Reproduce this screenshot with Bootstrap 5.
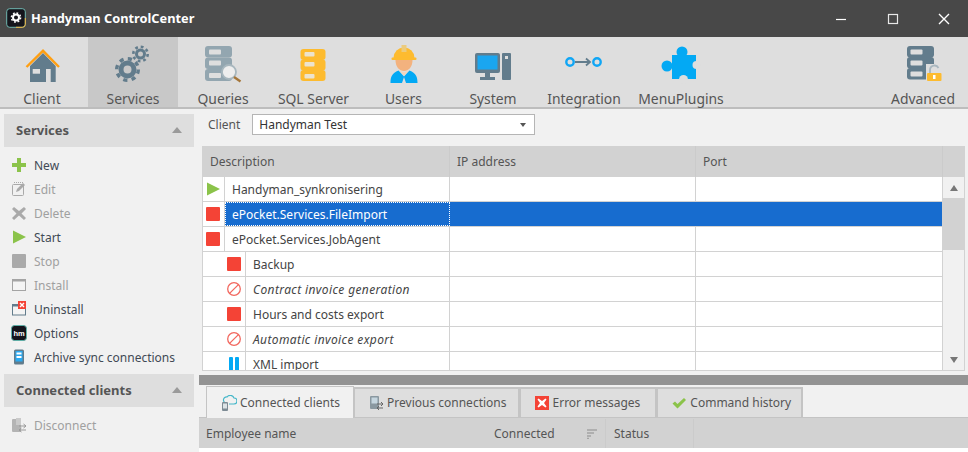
<!DOCTYPE html>
<html lang="en">
<head>
<meta charset="utf-8">
<title>Handyman ControlCenter</title>
<link href="https://cdn.jsdelivr.net/npm/bootstrap@5.3.0/dist/css/bootstrap.min.css" rel="stylesheet">
<style>
html,body{margin:0;height:452px;overflow:hidden;background:#fff}
body{font-family:"Noto Sans","Open Sans",sans-serif;font-size:12px;line-height:16px;color:#444}
.titlebar{height:37px;background:#484848;color:#fff;font-weight:700;font-size:12.8px}
.app-logo{width:20px;height:20px;margin:8px 5px 0 6px;flex:none}
.app-title{padding-top:10px}
.win-btn{width:52px;height:37px;display:flex;align-items:center;justify-content:center}
.win-close{width:49px}
.ribbon{height:72px;background:#dedede;border-bottom:2px solid #bdbdbd}
.rb-item{height:70px;display:flex;flex-direction:column;align-items:center;color:#555;font-size:13.9px;line-height:20px;flex:none}
.rb-item svg{height:36px;width:40px;margin-top:11px;margin-bottom:5px;flex:none;overflow:visible}
.rb-active{background:#c8c8c8}
.rb-client{width:88px;padding-right:4px}
.rb-w90{width:90px}.rb-w91{width:91px}.rb-w89{width:89px}.rb-w92{width:92px}.rb-w102{width:102px}
.workspace{height:343px}
.sidebar{width:199px;background:#f1f1f1;flex:none;padding-top:5px}
.grp-head{margin:0 5px 0 4px;height:33px;background:#dedede;font-weight:700;font-size:13px;color:#555;padding:0 12px 2px;display:flex;align-items:center;justify-content:space-between}
.caret-up{width:0;height:0;border-left:5px solid transparent;border-right:5px solid transparent;border-bottom:6px solid #9a9a9a}
.act-list{padding:7px 0 4px 11px}
.act{height:24px;display:flex;align-items:center;gap:7px;color:#414a55}
.act svg{width:16px;height:16px;flex:none;margin-top:-2px}
.act-off{color:#a0a0a0}
.main-pane{flex:1;min-width:0;background:#f1f1f1;display:flex;flex-direction:column}
.client-row{height:37px;padding:5px 0 0 9px;display:flex;align-items:flex-start;gap:12px;color:#555;flex:none}
.client-row span{padding-top:3px}
.combo{width:283px;height:21px;background:#fff;border:1px solid #b5b5b5;color:#333;padding:1px 6px;display:flex;justify-content:space-between;align-items:center}
.combo-caret{width:0;height:0;border-left:3.5px solid transparent;border-right:3.5px solid transparent;border-top:4px solid #555;margin-right:2px}
.svc-grid{margin-left:3px;width:763px;height:225px;background:#fff;border:1px solid #d2d2d2;border-top:0;display:flex;flex-direction:column;flex:none}
.grid-head{height:31px;background:#d2d2d2;display:grid;grid-template-columns:247px 246px 247px 1fr;flex:none;color:#555}
.grid-head div{padding:8px 0 0 7px;border-right:1px solid #cbcbcb}
.grid-head div:last-child{border-right:0}
.grid-body{flex:1;display:flex;min-height:0}
.rows{flex:1;overflow:hidden;min-width:0}
.g-row{height:25px;display:grid;grid-template-columns:22px 225px 246px 1fr;color:#444;border-bottom:1px solid #d2d2d2}
.g-row.sub{grid-template-columns:43px 204px 246px 1fr}
.g-row>div{border-right:1px solid #d2d2d2;padding:5px 0 0 7px;white-space:nowrap;height:24px}
.g-row>div:last-child{border-right:0}
.g-row>.ic{padding:0 2px 0 0;display:flex;align-items:center;justify-content:center}
.g-row.sub>.ic{justify-content:flex-end;padding-right:3px}
.g-row>.cell-sel{background:#176ccf;color:#fff;outline:1px dotted #fff;outline-offset:-1px;border-right-color:#176ccf}
.g-row>.cell-blue{background:#176ccf;border-right-color:#176ccf}
.it-text{font-style:italic;letter-spacing:.38px}
.sbar{width:22px;flex:none;background:#f1f1f1;display:flex;flex-direction:column;border-left:1px solid #d2d2d2}
.sb-btn{height:21px;display:flex;align-items:center;justify-content:center;flex:none}
.sb-up{width:0;height:0;border-left:4px solid transparent;border-right:4px solid transparent;border-bottom:6px solid #777}
.sb-dn{width:0;height:0;border-left:4px solid transparent;border-right:4px solid transparent;border-top:6px solid #777}
.sb-thumb{height:52px;background:#d2d2d2;flex:none}
.sb-track{flex:1}
.splitter{height:10px;background:#939393;margin-top:4px;flex:none}
.tabstrip{height:33px;display:flex;padding:1px 0 0 7px;flex:none;border-bottom:1px solid #c4c4c4;background:#f1f1f1}
.tb{height:30px;background:#dedede;border:2px solid #c4c4c4;border-bottom:0;border-left-width:1px;display:flex;align-items:center;gap:3px;color:#555;padding:0 12px 0 13px;margin-top:1px}
.tb svg{width:16px;height:16px;flex:none}
.tb-on{background:#f1f1f1;height:32px;margin-top:0;margin-bottom:-1px;border-width:1px 1px 0 1px;padding-left:14px;padding-right:13px}
.tb-prev{padding-right:11px}
.tb-err{padding-right:15px}
.tb-cmd{padding:0 10px 0 13px}
.bot-head{height:30px;background:#d2d2d2;display:flex;color:#555;flex:none;align-items:center;padding-top:1px}
.bot-fill{flex:1;background:#fff}
.bh1{width:295px;padding-left:7px}
.bh2{width:112px;display:flex;justify-content:space-between;padding-right:7px;height:100%;align-items:center;border-right:1px solid #cbcbcb}
.bh3{padding-left:8px;width:88px;height:100%;display:flex;align-items:center;border-right:1px solid #cbcbcb}
</style>
</head>
<body>
<div class="titlebar d-flex justify-content-between">
  <div class="d-flex">
    <svg class="app-logo" viewBox="0 0 20 20"><rect x=".7" y=".7" width="18.6" height="18.6" rx="3" fill="#15151c" stroke="#6fb7b0"/><path d="M10 19.3h6.300a3 3 0 0 0 3-3V10" fill="none" stroke="#f2b33d"/><circle cx="10" cy="9.500" r="3" fill="none" stroke="#fff" stroke-width="2"/><circle cx="10" cy="9.500" r="4.600" fill="none" stroke="#fff" stroke-width="1.500" stroke-dasharray="1.800 1.800"/></svg>
    <div class="app-title">Handyman ControlCenter</div>
  </div>
  <div class="d-flex">
    <div class="win-btn"><svg width="12" height="12" viewBox="0 0 12 12"><path d="M1 6.500h10" stroke="#fff" stroke-width="1.200"/></svg></div>
    <div class="win-btn"><svg width="12" height="12" viewBox="0 0 12 12"><rect x="1.500" y="1.500" width="9" height="9" fill="none" stroke="#e8e8e8" stroke-width="1.200"/></svg></div>
    <div class="win-btn win-close"><svg width="12" height="12" viewBox="0 0 12 12"><path d="M1 1l10 10M11 1L1 11" stroke="#fff" stroke-width="1.400"/></svg></div>
  </div>
</div>

<div class="ribbon d-flex">
  <div class="rb-item rb-client"><svg viewBox="0 0 40 36"><path d="M8 18L21 5l12.700 13v16H28.700V21H24v13H8z" fill="#627c8c"/><rect x="10.700" y="21" width="7.300" height="4.700" fill="#dedede"/><path d="M4.500 19L21 2.800 37 19" fill="none" stroke="#ff9f12" stroke-width="2.400"/></svg>Client</div>
  <div class="rb-item rb-active rb-w90"><svg viewBox="0 0 40 36"><g fill="none" stroke="#627c8c"><circle cx="14.500" cy="21.500" r="6.500" stroke-width="5"/><circle cx="14.500" cy="21.500" r="10.800" stroke-width="3.400" stroke-dasharray="4.200 4.280"/><circle cx="27.500" cy="6" r="4" stroke-width="3"/><circle cx="27.500" cy="6" r="7.200" stroke-width="2.600" stroke-dasharray="2.800 2.855"/></g></svg>Services</div>
  <div class="rb-item rb-w90"><svg viewBox="0 0 40 36"><g fill="#93a6b0"><rect x="2" y="-2" width="27" height="11.500" rx="3"/><rect x="2" y="9.500" width="27" height="11.500" rx="3"/><rect x="2" y="21" width="27" height="12" rx="3"/></g><g fill="#dedede"><rect x="6" y="1.500" width="12" height="5" rx="1"/><rect x="6" y="12.500" width="12" height="5" rx="1"/><rect x="6" y="25" width="12" height="5" rx="1"/></g><circle cx="26" cy="24" r="7" fill="#eee" stroke="#a8b7be" stroke-width="1.800"/><path d="M31 29l6.500 4.500" stroke="#a5763a" stroke-width="2.400"/></svg>Queries</div>
  <div class="rb-item rb-w91"><svg viewBox="0 0 40 36"><g fill="#fdbb2f"><rect x="6.500" y="1" width="25" height="11" rx="3"/><rect x="6.500" y="11.500" width="25" height="11" rx="3"/><rect x="6.500" y="22" width="25" height="11" rx="3"/></g><g fill="#ece3cd"><rect x="10.500" y="4" width="10" height="4.500" rx="1"/><rect x="10.500" y="14" width="10" height="4.500" rx="1"/><rect x="10.500" y="26" width="10" height="4.500" rx="1"/></g></svg>SQL Server</div>
  <div class="rb-item rb-w89"><svg viewBox="0 0 40 36"><path d="M9.500 10a10.500 10.500 0 0 1 21 0z" fill="#fdbb2f"/><rect x="7.500" y="9.500" width="25" height="2.500" rx="1" fill="#fdbb2f"/><rect x="17.500" y="-3" width="5" height="7" fill="#eccb7c"/><path d="M11.500 12h17c0 7-4 11-8.500 11s-8.500-4-8.500-11z" fill="#f3b27e"/><path d="M6.500 35c0-6 1.500-10 8-12.500l5.500 6 5.500-6c6.500 2.500 8 6.500 8 12.500z" fill="#03a9f4"/><path d="M15.500 22.500l4.500 5 4.500-5-4.500 2z" fill="#f6d5b8"/><path d="M18 35l2-6 2 6z" fill="#dedede"/></svg>Users</div>
  <div class="rb-item rb-w90"><svg viewBox="0 0 40 36"><rect x="2" y="5" width="25" height="20" rx="2" fill="#627c8c"/><rect x="4.500" y="7.500" width="20" height="14" fill="#1aa6f0"/><path d="M12 25h5v4h-5zM7 29h15v3H7z" fill="#627c8c"/><rect x="29" y="5" width="9" height="27" rx="1" fill="#627c8c"/><rect x="32" y="8" width="3" height="3" fill="#dedede"/></svg>System</div>
  <div class="rb-item rb-w92"><svg viewBox="0 0 40 36"><circle cx="6" cy="14" r="3.700" fill="none" stroke="#10a6f5" stroke-width="2.400"/><circle cx="33" cy="14" r="3.700" fill="none" stroke="#10a6f5" stroke-width="2.400"/><path d="M11 14h14M22 10.500l4 3.500-4 3.500" fill="none" stroke="#627c8c" stroke-width="1.800"/></svg>Integration</div>
  <div class="rb-item rb-w102"><svg viewBox="0 0 40 36"><circle cx="21" cy="4" r="5.500" fill="#03a9f4"/><circle cx="6" cy="18" r="5.500" fill="#03a9f4"/><rect x="11" y="7" width="24" height="24" fill="#03a9f4"/><circle cx="35.500" cy="17" r="4" fill="#dedede"/><circle cx="22.500" cy="31.500" r="4.500" fill="#dedede"/></svg>MenuPlugins</div>
  <div class="flex-grow-1"></div>
  <div class="rb-item rb-w90"><svg viewBox="0 0 40 36"><g fill="#627c8c"><rect x="4" y="-2" width="27" height="11.500" rx="3"/><rect x="4" y="9" width="27" height="11.500" rx="3"/><rect x="4" y="20" width="23" height="11.500" rx="3"/></g><g fill="#dedede"><rect x="7.500" y="1.500" width="12" height="5" rx="1"/><rect x="7.500" y="12.500" width="12" height="5" rx="1"/><rect x="7.500" y="23.500" width="12" height="5" rx="1"/></g><path d="M23 16h16v18H23z" fill="#dedede"/><path d="M27 25v-3a4.500 4.500 0 0 1 8.500-2" fill="none" stroke="#a9b7bf" stroke-width="1.800"/><rect x="24" y="25" width="14.500" height="8" rx="1" fill="#fdbb2f"/><rect x="30" y="27" width="2.500" height="4" fill="#fff"/></svg>Advanced</div>
</div>

<div class="workspace d-flex">
  <aside class="sidebar">
    <div class="grp-head">Services <span class="caret-up"></span></div>
    <div class="act-list">
      <div class="act"><svg viewBox="0 0 16 16"><path d="M6 1h4v5h5v4h-5v5H6v-5H1V6h5z" fill="#8bc34a"/></svg>New</div>
      <div class="act act-off"><svg viewBox="0 0 16 16"><rect x="1.500" y="3.500" width="11" height="11" rx="1" fill="none" stroke="#aaa"/><path d="M5 11l1-3 6-6 2 2-6 6z" fill="#aaa"/><path d="M3 1.500h10" stroke="#aaa" stroke-dasharray="1 1"/></svg>Edit</div>
      <div class="act act-off"><svg viewBox="0 0 16 16"><path d="M3 2l5 4 5-4 2 2-4.500 4.500L15 13l-2 2-5-4.500L3 15l-2-2 4.500-4.500L1 4z" fill="#aaa"/></svg>Delete</div>
      <div class="act"><svg viewBox="0 0 16 16"><path d="M2 1.500L15 8 2 14.500z" fill="#8bc34a"/></svg>Start</div>
      <div class="act act-off"><svg viewBox="0 0 16 16"><rect x="1" y="1" width="14" height="14" rx="1" fill="#aaa"/></svg>Stop</div>
      <div class="act act-off"><svg viewBox="0 0 16 16"><rect x="1.500" y="2.500" width="13" height="11" fill="#f4f4f4" stroke="#a4a4a4"/><rect x="1" y="2" width="14" height="2.500" fill="#a4a4a4"/></svg>Install</div>
      <div class="act"><svg viewBox="0 0 16 16"><rect x="1.500" y="3.500" width="13" height="10.500" fill="#f4f4f4" stroke="#627c8c"/><rect x="1" y="3" width="9" height="2.500" fill="#627c8c"/><rect x="7" y="0" width="8" height="8" fill="#f44336"/><path d="M9 2l4 4m0-4L9 6" stroke="#fff" stroke-width="1.400"/></svg>Uninstall</div>
      <div class="act"><svg viewBox="0 0 16 16"><rect x=".5" y=".5" width="15" height="15" rx="3" fill="#14141c" stroke="#5fb0a8"/><text x="8" y="11" font-size="7.500" font-weight="700" text-anchor="middle" fill="#fff" font-family="Liberation Sans">hm</text></svg>Options</div>
      <div class="act"><svg viewBox="0 0 16 16"><rect x="3" y="0.500" width="10" height="15" rx="1.500" fill="#627c8c"/><rect x="4.500" y="2" width="7" height="10.500" fill="#29a9f2"/><rect x="5.500" y="3.500" width="5" height="2" fill="#fff"/><rect x="5.500" y="7" width="5" height="2" fill="#fff"/></svg>Archive sync connections</div>
    </div>
    <div class="grp-head">Connected clients <span class="caret-up"></span></div>
    <div class="act-list">
      <div class="act act-off"><svg viewBox="0 0 16 16"><rect x="1" y="2" width="9" height="13" rx="1" fill="#b4b4b4"/><rect x="5" y="1" width="5" height="7" fill="#cacaca"/><path d="M8 9h7M12.500 7l2.500 2-2.500 2M15 13H8M10.500 11L8 13l2.500 2" fill="none" stroke="#999"/></svg>Disconnect</div>
    </div>
  </aside>

  <main class="main-pane">
    <div class="client-row"><span>Client</span><div class="combo">Handyman Test<i class="combo-caret"></i></div></div>
    <div class="svc-grid">
      <div class="grid-head"><div>Description</div><div>IP address</div><div>Port</div><div></div></div>
      <div class="grid-body">
        <div class="rows">
          <div class="g-row"><div class="ic"><svg width="16" height="16" viewBox="0 0 16 16"><path d="M2 1.500L15 8 2 14.500z" fill="#8bc34a"/></svg></div><div>Handyman_synkronisering</div><div></div><div></div></div>
          <div class="g-row"><div class="ic"><svg width="16" height="16" viewBox="0 0 16 16"><rect x="1" y="1" width="14" height="14" rx="1" fill="#f44336"/></svg></div><div class="cell-sel">ePocket.Services.FileImport</div><div class="cell-blue"></div><div class="cell-blue"></div></div>
          <div class="g-row"><div class="ic"><svg width="16" height="16" viewBox="0 0 16 16"><rect x="1" y="1" width="14" height="14" rx="1" fill="#f44336"/></svg></div><div>ePocket.Services.JobAgent</div><div></div><div></div></div>
          <div class="g-row sub"><div class="ic"><svg width="16" height="16" viewBox="0 0 16 16"><rect x="1" y="1" width="14" height="14" rx="1" fill="#f44336"/></svg></div><div>Backup</div><div></div><div></div></div>
          <div class="g-row sub"><div class="ic"><svg width="16" height="16" viewBox="0 0 16 16"><circle cx="8" cy="8" r="6.300" fill="none" stroke="#f2685f" stroke-width="1.300"/><path d="M3.600 12.400l8.800-8.800" stroke="#f2685f" stroke-width="1.300"/></svg></div><div class="it-text">Contract invoice generation</div><div></div><div></div></div>
          <div class="g-row sub"><div class="ic"><svg width="16" height="16" viewBox="0 0 16 16"><rect x="1" y="1" width="14" height="14" rx="1" fill="#f44336"/></svg></div><div>Hours and costs export</div><div></div><div></div></div>
          <div class="g-row sub"><div class="ic"><svg width="16" height="16" viewBox="0 0 16 16"><circle cx="8" cy="8" r="6.300" fill="none" stroke="#f2685f" stroke-width="1.300"/><path d="M3.600 12.400l8.800-8.800" stroke="#f2685f" stroke-width="1.300"/></svg></div><div class="it-text">Automatic invoice export</div><div></div><div></div></div>
          <div class="g-row sub"><div class="ic"><svg width="16" height="16" viewBox="0 0 16 16"><rect x="3" y="1" width="4" height="14" rx="1" fill="#03a9f4"/><rect x="9" y="1" width="4" height="14" rx="1" fill="#03a9f4"/></svg></div><div>XML import</div><div></div><div></div></div>
        </div>
        <div class="sbar">
          <div class="sb-btn"><i class="sb-up"></i></div>
          <div class="sb-thumb"></div>
          <div class="sb-track"></div>
          <div class="sb-btn"><i class="sb-dn"></i></div>
        </div>
      </div>
    </div>
    <div class="splitter"></div>
    <div class="tabstrip">
      <div class="tb tb-on"><svg viewBox="0 0 16 16"><path d="M5 8a3 3 0 0 1 1-6 4 4 0 0 1 7 1 3 3 0 0 1 0 6H8" fill="none" stroke="#45b7c9" stroke-width="1.200"/><rect x="1" y="7" width="6" height="9" rx="1" fill="#7d8b94"/><rect x="2" y="8.500" width="4" height="5" fill="#dce3e6"/></svg>Connected clients</div>
      <div class="tb tb-prev"><svg viewBox="0 0 16 16"><rect x="2" y="1" width="9" height="13" rx="1" fill="#8a98a0"/><rect x="3.500" y="2.500" width="6" height="6" fill="#c6d6df"/><path d="M9 9h6M13 7l2 2-2 2M15 13H9M11 11l-2 2 2 2" fill="none" stroke="#666"/></svg>Previous connections</div>
      <div class="tb tb-err"><svg viewBox="0 0 16 16"><rect x="1" y="1" width="14" height="14" fill="#f44336"/><path d="M4.500 3.500L8 6l3.500-2.500 1 1L10 8l2.500 3.500-1 1L8 10l-3.500 2.500-1-1L6 8 3.500 4.500z" fill="#fff"/></svg>Error messages</div>
      <div class="tb tb-cmd"><svg viewBox="0 0 16 16"><path d="M1.500 8.500l2.500-2L6.500 9 13 3l2 2-8.500 8.500z" fill="#8bc34a"/></svg>Command history</div>
    </div>
    <div class="bot-head">
      <div class="bh1">Employee name</div>
      <div class="bh2">Connected<svg width="12" height="10" viewBox="0 0 12 10"><path d="M1 1h10M1 4h7M1 7h4M1 9.500h2" stroke="#a4a4a4" stroke-width="1.300"/></svg></div>
      <div class="bh3">Status</div>
      <div class="flex-grow-1"></div>
    </div>
    <div class="bot-fill"></div>
  </main>
</div>
<script src="https://cdn.jsdelivr.net/npm/bootstrap@5.3.0/dist/js/bootstrap.bundle.min.js"></script>
</body>
</html>
